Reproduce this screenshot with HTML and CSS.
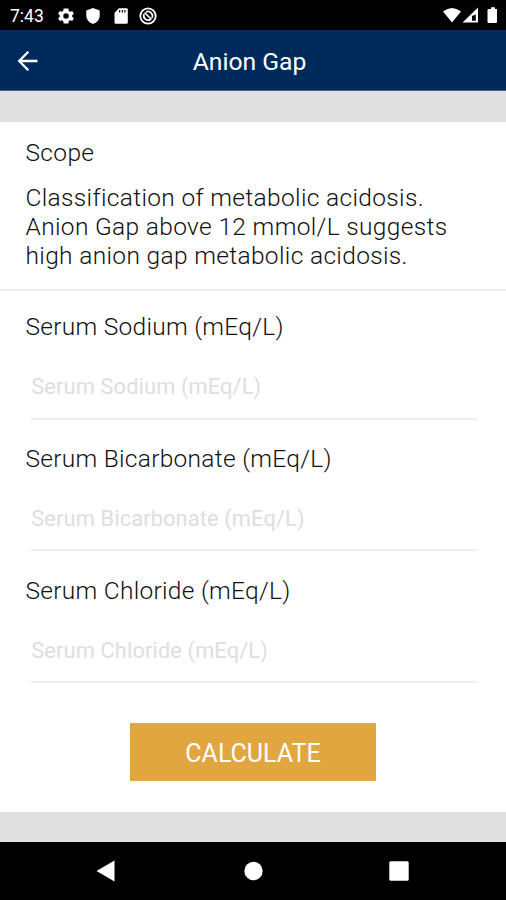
FILE: index.html
```
<!DOCTYPE html>
<html lang="en">
<head>
<meta charset="utf-8">
<title>Anion Gap</title>
<link rel="stylesheet" href="styles.css">
</head>
<body>
<div class="screen">
  <div class="status">
    <span class="time">7:43</span>
    <div class="notices">
      <svg width="20" height="20" viewBox="0 0 24 24"><path fill="#fff" fill-rule="evenodd" d="M19.4 13a7.500 7.500 0 0 0 0-2l2.100-1.600-2-3.500-2.500 1a7.500 7.500 0 0 0-1.700-1L14.900 3H9.100l-.4 2.900a7.500 7.500 0 0 0-1.700 1l-2.500-1-2 3.500L4.600 11a7.500 7.500 0 0 0 0 2l-2.100 1.600 2 3.500 2.500-1a7.500 7.500 0 0 0 1.700 1l.4 2.900h5.800l.4-2.900a7.500 7.500 0 0 0 1.700-1l2.500 1 2-3.500zM12 15.300a3.300 3.300 0 1 1 0-6.600 3.300 3.300 0 0 1 0 6.600z"/></svg>
      <svg width="20" height="20" viewBox="0 0 20 20"><path fill="#fff" d="M10 2l6.700 2.600v5c0 3.900-2.700 7.200-6.700 8.400-4-1.200-6.700-4.500-6.700-8.400v-5z"/></svg>
      <svg width="20" height="20" viewBox="0 0 20 20"><path fill="#fff" fill-rule="evenodd" d="M8 2.300h7.500q1.300 0 1.300 1.300v12.800q0 1.300-1.300 1.300H4.800q-1.300 0-1.300-1.300V6.800zM8 4v2.500h1.200V4zm2.700 0v2.500h1.200V4zm2.600 0v2.500h1.200V4z"/></svg>
      <svg width="20" height="20" viewBox="0 0 20 20"><g fill="none" stroke="#fff"><circle cx="10" cy="10" r="7.700" stroke-width="1.800"/><path d="M6 8a4.500 4.500 0 0 0 6.500 5.500M8 6a4.500 4.500 0 0 1 6 6M6.500 6.500l7 7" stroke-width="1.700"/></g></svg>
    </div>
    <svg class="signals" width="60" height="20" viewBox="0 0 60 20"><path fill="#fff" fill-rule="evenodd" d="M2 5.500Q11-1.500 20 5.500L11 16.500zM37 1.500v15H21.500zM31 10v4.800h3.800V8.500zM48 3h2V1.200h4V3h2v13q0 1-1 1h-7.500q-1 0-1-1V4q0-1 1-1z"/></svg>
  </div>
  <header class="bar">
    <svg class="back" width="24" height="24" viewBox="0 0 24 24"><path fill="none" stroke="#fff" stroke-width="2.300" d="M22.500 12H4.500M13.300 2.800L4.200 12l9.100 9.200"/></svg>
    <h1>Anion Gap</h1>
  </header>
  <main>
    <section class="scope">
      <h2>Scope</h2>
      <p>Classification of metabolic acidosis.<br>Anion Gap above 12 mmol/L suggests<br>high anion gap metabolic acidosis.</p>
    </section>
    <form class="form">
      <label>Serum Sodium (mEq/L)<input placeholder="Serum Sodium (mEq/L)"></label>
      <label>Serum Bicarbonate (mEq/L)<input placeholder="Serum Bicarbonate (mEq/L)"></label>
      <label>Serum Chloride (mEq/L)<input placeholder="Serum Chloride (mEq/L)"></label>
      <button type="button">CALCULATE</button>
    </form>
  </main>
  <nav class="nav">
    <svg width="24" height="24" viewBox="0 0 24 24"><path fill="#fff" d="M20.500 1.500v21L2.500 12z"/></svg>
    <svg width="24" height="24" viewBox="0 0 24 24"><circle cx="12.500" cy="12" r="9.200" fill="#fff"/></svg>
    <svg width="24" height="24" viewBox="0 0 24 24"><rect x="2.300" y="2.300" width="19.400" height="19.400" rx="1.500" fill="#fff"/></svg>
  </nav>
</div>
</body>
</html>
```
FILE: styles.css
```
* { box-sizing: border-box; }
body { margin: 0; background: #000; font-family: Roboto, sans-serif; color: #111; }
.screen { width: 506px; height: 900px; display: flex; flex-direction: column; overflow: hidden; background: #e0e0e0; }
.status { height: 30px; background: #000; color: #fff; display: flex; align-items: center; padding: 1px 5px 0 10px; }
.time { font-size: 17.500px; width: 46px; }
.notices { display: flex; gap: 7.300px; }
.signals { margin-left: auto; }
.bar { height: 61px; background: #002a5c; color: #fff; display: flex; align-items: center; justify-content: center; position: relative; border-bottom: 1px solid #4b6285; }
.back { position: absolute; left: 15px; top: 19px; }
h1 { margin: 3px 0 0; padding-right: 7px; font-size: 24.700px; font-weight: 400; line-height: 30px; }
main { margin-top: 31px; height: 690px; background: #fff; }
.scope { height: 169px; padding: 16px 25.500px 0; border-bottom: 2px solid #eee; }
h2 { margin: 0 0 16px; font-size: 24.500px; font-weight: 300; line-height: 29px; letter-spacing: .33px; }
p { margin: 0; font-size: 24.500px; font-weight: 300; line-height: 29px; letter-spacing: .34px; white-space: nowrap; }
.form { padding: 21px 29px 0 25.500px; display: flex; flex-direction: column; }
label { height: 131.800px; font-size: 24.500px; font-weight: 300; line-height: 29px; letter-spacing: .28px; }
input { display: block; width: 446px; height: 64px; margin: 14.600px 0 0 5px; padding: 0 0 0 .8px; border: 0; border-bottom: 2px solid #eee; background: none; font: 400 21.800px Roboto, sans-serif; letter-spacing: .13px; outline: 0; }
input::placeholder { color: #dedede; opacity: 1; }
button { width: 246px; height: 58px; margin: 15.800px 0 0 104.500px; padding: 3px 0 0; border: 0; background: #e2a640; color: #fff; font: 400 25px Roboto, sans-serif; }
.nav { height: 58px; margin-top: auto; background: #000; display: flex; justify-content: space-between; align-items: center; padding: 0 95px 0 94px; }
```
